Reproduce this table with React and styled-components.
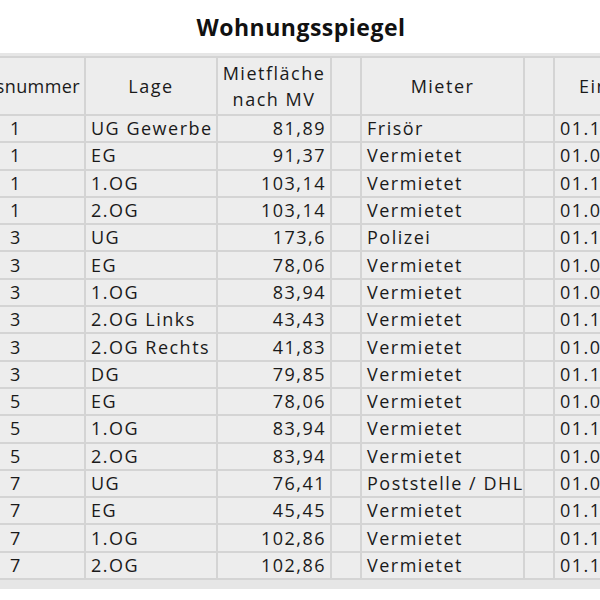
import styled, { createGlobalStyle } from 'styled-components'

const GlobalStyle = createGlobalStyle`
  html, body {
    margin: 0;
    padding: 0;
    background: #ffffff;
  }
  body {
    width: 600px;
    height: 600px;
    overflow: hidden;
    font-family: "Open Sans", "DejaVu Sans", sans-serif;
  }
`

const Page = styled.div`
  width: 600px;
  height: 600px;
  overflow: hidden;
  background: #ffffff;
`

const Title = styled.h1`
  margin: 0;
  height: 53px;
  display: flex;
  align-items: center;
  justify-content: center;
  padding-left: 2px;
  font-size: 23px;
  font-weight: 700;
  letter-spacing: 0.5px;
  color: #111111;
`

const Sheet = styled.div`
  margin-left: -46px;
  width: 713px;
  background: #e6e6e6;
  padding: 3px 0 9px;
`

const Table = styled.table`
  border-collapse: collapse;
  table-layout: fixed;
  width: 713px;
  font-size: 18px;
  letter-spacing: 1.5px;
  color: #1a1a1a;
  background: #ededed;
`

const HeadRow = styled.tr`
  height: 58px;
`

const Row = styled.tr`
  height: 27.3px;
`

const Head = styled.th`
  border: 2px solid #d4d4d4;
  font-weight: 400;
  text-align: ${(p) => (p.$end ? 'right' : 'center')};
  letter-spacing: ${(p) => (p.$end ? '0.4px' : 'inherit')};
  line-height: 26px;
  padding: 0 ${(p) => (p.$end ? '4px' : '0')} 0 0;
  white-space: nowrap;
  overflow: hidden;
`

const Cell = styled.td`
  border: 2px solid #d4d4d4;
  padding: 0 ${(p) => (p.$align === 'right' ? '4px' : '0')} 0 ${(p) => p.$indent || 5}px;
  text-align: ${(p) => p.$align || 'left'};
  line-height: 23px;
  white-space: nowrap;
  overflow: hidden;
`

const columns = [130, 132, 114, 30, 163, 30, 114]

const rows = [
  ['1', 'UG Gewerbe', '81,89', 'Frisör', '01.11.2018'],
  ['1', 'EG', '91,37', 'Vermietet', '01.02.2016'],
  ['1', '1.OG', '103,14', 'Vermietet', '01.10.2017'],
  ['1', '2.OG', '103,14', 'Vermietet', '01.04.2015'],
  ['3', 'UG', '173,6', 'Polizei', '01.12.2014'],
  ['3', 'EG', '78,06', 'Vermietet', '01.06.2019'],
  ['3', '1.OG', '83,94', 'Vermietet', '01.08.2016'],
  ['3', '2.OG Links', '43,43', 'Vermietet', '01.11.2017'],
  ['3', '2.OG Rechts', '41,83', 'Vermietet', '01.03.2018'],
  ['3', 'DG', '79,85', 'Vermietet', '01.10.2015'],
  ['5', 'EG', '78,06', 'Vermietet', '01.05.2017'],
  ['5', '1.OG', '83,94', 'Vermietet', '01.11.2016'],
  ['5', '2.OG', '83,94', 'Vermietet', '01.07.2018'],
  ['7', 'UG', '76,41', 'Poststelle / DHL', '01.01.2014'],
  ['7', 'EG', '45,45', 'Vermietet', '01.12.2019'],
  ['7', '1.OG', '102,86', 'Vermietet', '01.10.2016'],
  ['7', '2.OG', '102,86', 'Vermietet', '01.11.2018'],
]

export default function App() {
  return (
    <Page>
      <GlobalStyle />
      <Title>Wohnungsspiegel</Title>
      <Sheet>
        <Table>
          <colgroup>
            {columns.map((w, i) => (
              <col key={i} style={{ width: w }} />
            ))}
          </colgroup>
          <thead>
            <HeadRow>
              <Head $end>Hausnummer</Head>
              <Head>Lage</Head>
              <Head>
                Mietfläche
                <br />
                nach MV
              </Head>
              <Head />
              <Head>Mieter</Head>
              <Head />
              <Head>Einzug</Head>
            </HeadRow>
          </thead>
          <tbody>
            {rows.map((r, i) => (
              <Row key={i}>
                <Cell $indent={54}>{r[0]}</Cell>
                <Cell>{r[1]}</Cell>
                <Cell $align="right">{r[2]}</Cell>
                <Cell />
                <Cell>{r[3]}</Cell>
                <Cell />
                <Cell>{r[4]}</Cell>
              </Row>
            ))}
          </tbody>
        </Table>
      </Sheet>
    </Page>
  )
}
